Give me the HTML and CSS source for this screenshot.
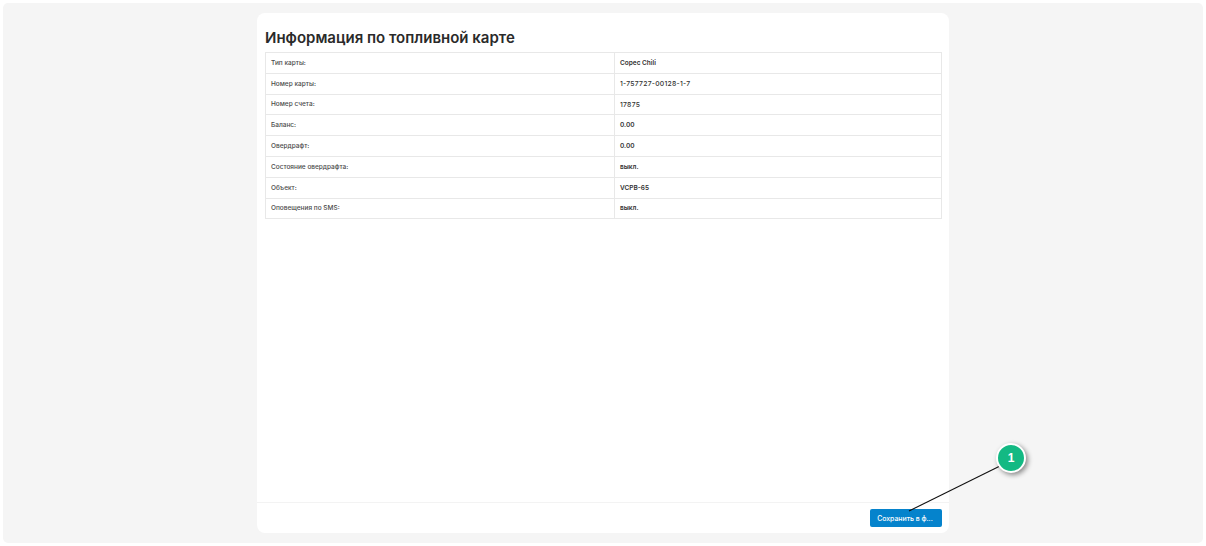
FILE: index.html
```html
<!DOCTYPE html>
<html lang="ru">
<head>
<meta charset="utf-8">
<title>Информация по топливной карте</title>
<link rel="stylesheet" href="styles.css">
</head>
<body>
<main class="panel">
  <section class="card">
    <div class="content">
      <h1 class="title">Информация по топливной карте</h1>
      <table class="info">
        <tbody>
          <tr><th>Тип карты:</th><td>Copec Chili</td></tr>
          <tr><th>Номер карты:</th><td class="mono">1-757727-00128-1-7</td></tr>
          <tr><th>Номер счета:</th><td class="mono">17875</td></tr>
          <tr><th>Баланс:</th><td>0.00</td></tr>
          <tr><th>Овердрафт:</th><td>0.00</td></tr>
          <tr><th>Состояние овердрафта:</th><td>выкл.</td></tr>
          <tr><th>Объект:</th><td>VCPB-65</td></tr>
          <tr><th>Оповещения по SMS:</th><td>выкл.</td></tr>
        </tbody>
      </table>
    </div>
    <footer class="actions">
      <button class="save" type="button">Сохранить в ф...</button>
    </footer>
  </section>
</main>
<svg class="pointer" width="1206" height="546" viewBox="0 0 1206 546" aria-hidden="true">
  <line x1="1000" y1="466" x2="909" y2="511" stroke="#111" stroke-width="1.1"/>
</svg>
<div class="badge">1</div>
</body>
</html>
```
FILE: styles.css
```css
html, body {
  margin: 0;
  height: 100%;
  background: #ffffff;
  overflow: hidden;
}
body {
  padding: 3px;
  box-sizing: border-box;
  font-family: Inter, "Noto Sans", sans-serif;
  color: #2b2b2b;
}
.panel {
  height: 540px;
  box-sizing: border-box;
  padding: 10px 0;
  background: #f5f5f5;
  border-radius: 5px;
  display: flex;
  justify-content: center;
}
.card {
  width: 692px;
  background: #ffffff;
  border-radius: 8px;
  display: flex;
  flex-direction: column;
}
.content {
  flex: 1;
  padding: 15px 7px 0 8px;
}
.title {
  margin: 0 0 5px;
  font-size: 15px;
  line-height: 19px;
  font-weight: 600;
  color: #2a2a2a;
}
.info {
  width: 100%;
  border-collapse: collapse;
  table-layout: fixed;
  font-size: 6.5px;
}
.info th, .info td {
  height: 20.8px;
  padding: 0 5px;
  border: 1px solid #e8e8e8;
  box-sizing: border-box;
  text-align: left;
}
.info th {
  width: 349px;
  font-weight: 500;
  color: #4a4a4a;
}
.info td {
  font-weight: 600;
  color: #333333;
}
.info td.mono {
  font-size: 6.8px;
  font-weight: 500;
  letter-spacing: 0.25px;
}
.actions {
  height: 31px;
  box-sizing: border-box;
  border-top: 1px solid #f3f3f3;
  padding: 6px 7px 0 0;
  display: flex;
  justify-content: flex-end;
  align-items: flex-start;
}
.save {
  width: 72px;
  height: 18px;
  padding: 0 2px 0 0;
  border: 0;
  border-radius: 2px;
  background: #0583cc;
  color: #ffffff;
  font-family: inherit;
  font-size: 6.9px;
  font-weight: 500;
}
.pointer {
  position: absolute;
  left: 0;
  top: 0;
}
.badge {
  position: absolute;
  left: 996px;
  top: 443px;
  width: 30px;
  height: 30px;
  box-sizing: border-box;
  border: 2px solid #ffffff;
  border-radius: 50%;
  background: #13b983;
  color: #ffffff;
  font-size: 12px;
  font-weight: 700;
  font-family: "Liberation Sans", sans-serif;
  line-height: 26px;
  text-align: center;
  box-shadow: 2px 2px 5px rgba(0, 0, 0, 0.45);
}
```
